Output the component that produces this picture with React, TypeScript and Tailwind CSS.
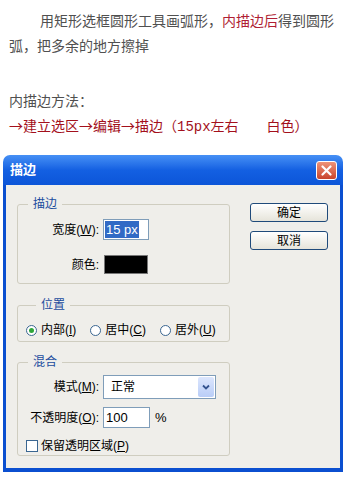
import React from "react";

const dlgFont = "font-['Liberation_Sans','Noto_Sans_CJK_SC',sans-serif]";

interface GroupBoxProps {
  title: string;
  className?: string;
  children: React.ReactNode;
}

const GroupBox = ({ title, className, children }: GroupBoxProps) => (
  <fieldset className={`rounded-[3px] border border-[#cfcdc0] ${className ?? ""}`}>
    <legend className="ml-[10px] px-[5px] text-[12px] leading-[14px] text-[#1b4c9e]">{title}</legend>
    {children}
  </fieldset>
);

const Radio = ({ checked, children }: { checked?: boolean; children: React.ReactNode }) => (
  <div className="flex items-center gap-[4px]">
    <span className="flex h-[11px] w-[11px] items-center justify-center rounded-full border border-[#3a6691] bg-white">
      {checked && <span className="h-[5px] w-[5px] rounded-full bg-[#2fa63a]" />}
    </span>
    <span>{children}</span>
  </div>
);

const XpButton = ({ children }: { children: React.ReactNode }) => (
  <button className="flex h-[19px] w-[78px] items-center justify-center rounded-[3px] border border-[#1f4a7a] bg-gradient-to-b from-white to-[#e6e4da] text-[12px] leading-none text-black">
    {children}
  </button>
);

export default function App() {
  return (
    <div className="min-h-[482px] w-[353px] bg-white">
      <div className="px-[9px] pt-[8px] font-['Noto_Sans_CJK_SC',sans-serif] text-[14px] leading-[25px] text-[#505050]">
        <p className="indent-[31px]">
          <span>用矩形选框圆形工具画弧形，</span>
          <span className="text-[#b01e34]">内描边后</span>
          <span>得到圆形</span>
          <br />
          <span>弧，把多余的地方擦掉</span>
        </p>
        <p className="mt-[30px]">内描边方法：</p>
        <p className="text-[#a3101c]">
          →建立选区→编辑→描边（<span className="font-['Liberation_Mono',monospace]">15px</span>左右　　白色）
        </p>
      </div>

      <div className={`ml-[3px] mt-[15px] w-[340px] ${dlgFont}`}>
        <div className="flex h-[30px] items-center justify-between rounded-t-[7px] bg-gradient-to-b from-[#4690f5] via-[#1460e2] to-[#0c55d8] pl-[7px] pr-[6px]">
          <span className="text-[13px] font-bold text-white">描边</span>
          <span className="flex h-[19px] w-[21px] items-center justify-center rounded-[3px] border border-white bg-gradient-to-b from-[#ee9378] to-[#c8432b]">
            <svg width="11" height="11" viewBox="0 0 11 11">
              <path d="M1.5 1.5 L9.5 9.5 M9.5 1.5 L1.5 9.5" stroke="white" strokeWidth="2.2" strokeLinecap="round" />
            </svg>
          </span>
        </div>

        <div className="flex gap-[20px] border-x-[3px] border-b-[4px] border-[#0b4fd0] bg-[#efeeea] pb-[12px] pl-[11px] text-[12px] text-black">
          <div className="mt-[12px] flex w-[213px] flex-col">
            <GroupBox title="描边" className="pb-[9px] pt-[8px]">
              <div className="grid grid-cols-[81px_auto] items-center gap-x-[4px] gap-y-[15px]">
                <span className="text-right">
                  宽度(<u>W</u>):
                </span>
                <div className="flex h-[21px] w-[46px] items-center border border-[#7f9db9] bg-white pl-[1px]">
                  <span className="bg-[#316ac5] px-[1px] text-[13px] leading-[17px] text-white">15 px</span>
                </div>
                <span className="text-right">颜色:</span>
                <div className="ml-[1px] h-[19px] w-[44px] border border-[#777] bg-black" />
              </div>
            </GroupBox>

            <GroupBox title="位置" className="mt-[14px] pb-[3px] pl-[8px] pt-[10px]">
              <div className="flex items-center gap-[14px] leading-[16px]">
                <Radio checked>
                  内部(<u>I</u>)
                </Radio>
                <Radio>
                  居中(<u>C</u>)
                </Radio>
                <Radio>
                  居外(<u>U</u>)
                </Radio>
              </div>
            </GroupBox>

            <GroupBox title="混合" className="mt-[13px] pb-[2px] pt-[6px]">
              <div className="grid grid-cols-[81px_auto] items-center gap-x-[4px] gap-y-[8px]">
                <span className="text-right">
                  模式(<u>M</u>):
                </span>
                <div className="flex h-[24px] w-[113px] items-center justify-between border border-[#7f9db9] bg-white pl-[7px] pr-[1px]">
                  <span>正常</span>
                  <span className="flex h-[20px] w-[16px] items-center justify-center rounded-[2px] bg-gradient-to-b from-[#dce6fd] to-[#b9cdf7]">
                    <svg width="8" height="6" viewBox="0 0 8 6">
                      <path d="M1 1.5 L4 4.5 L7 1.5" fill="none" stroke="#34538f" strokeWidth="1.8" />
                    </svg>
                  </span>
                </div>
                <span className="text-right">
                  不透明度(<u>O</u>):
                </span>
                <div className="flex items-center gap-[5px]">
                  <div className="flex h-[21px] w-[47px] items-center border border-[#7f9db9] bg-white pl-[2px] text-[13px]">100</div>
                  <span className="text-[13px]">%</span>
                </div>
              </div>
              <div className="ml-[8px] mt-[11px] flex items-center gap-[3px] leading-[14px]">
                <span className="h-[12px] w-[12px] border border-[#3a6691] bg-white" />
                <span>
                  保留透明区域(<u>P</u>)
                </span>
              </div>
            </GroupBox>
          </div>

          <div className="mt-[18px] flex flex-col gap-[9px]">
            <XpButton>确定</XpButton>
            <XpButton>取消</XpButton>
          </div>
        </div>
      </div>
    </div>
  );
}
